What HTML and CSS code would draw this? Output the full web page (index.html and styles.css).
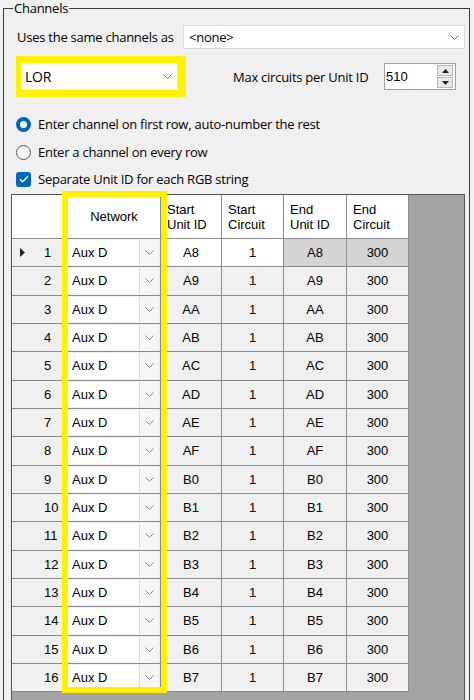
FILE: index.html
```html
<!doctype html>
<html lang="en">
    <head>
        <title>Channels</title>
        <link rel="stylesheet" href="styles.css">
    </head>
    <body>
        <fieldset class="channels">
            <legend>Channels</legend>

            <div class="same-row">
                <span class="same-label">Uses the same channels as</span>
                <div class="combo combo-same">
                    <span>&lt;none&gt;</span>
                    <svg class="chev" width="9" height="5" viewBox="0 0 9 5"><polyline points="0.5,0.5 4.5,4.5 8.5,0.5" /></svg>
                </div>
            </div>

            <div class="network-row">
                <div class="mark-box">
                    <div class="combo combo-net">
                        <span>LOR</span>
                        <svg class="chev" width="9" height="5" viewBox="0 0 9 5"><polyline points="0.5,0.5 4.5,4.5 8.5,0.5" /></svg>
                    </div>
                </div>
                <span class="max-label">Max circuits per Unit ID</span>
                <div class="updown">
                    <span class="updown-value">510</span>
                    <div class="spin">
                        <span class="spin-btn">
                            <svg width="7" height="4" viewBox="0 0 7 4"><polygon points="0,4 3.5,0 7,4" /></svg>
                        </span>
                        <span class="spin-btn">
                            <svg width="7" height="4" viewBox="0 0 7 4"><polygon points="0,0 3.5,4 7,0" /></svg>
                        </span>
                    </div>
                </div>
            </div>

            <div class="option option-first">
                <span class="radio checked"></span>
                Enter channel on first row, auto-number the rest
            </div>
            <div class="option">
                <span class="radio"></span>
                Enter a channel on every row
            </div>
            <div class="option option-check">
                <span class="check">
                    <svg width="10" height="8" viewBox="0 0 10 8"><polyline points="1,4.2 3.7,6.8 9,1.2" /></svg>
                </span>
                Separate Unit ID for each RGB string
            </div>

            <!-- channel grid -->
            <div class="dgv">
                <div class="dgv-head">
                    <div class="cell hd"></div>
                    <div class="cell hd hd-center">Network</div>
                    <div class="cell hd">Start<br>Unit ID</div>
                    <div class="cell hd">Start<br>Circuit</div>
                    <div class="cell hd">End<br>Unit ID</div>
                    <div class="cell hd">End<br>Circuit</div>
                </div>
                <div class="dgv-body">
                    <div class="cell rowhdr"><span class="mark"><svg width="5" height="9" viewBox="0 0 5 9"><polygon points="0,0 5,4.5 0,9" /></svg></span>1</div>
                    <div class="cell net"><div class="cell-combo"><span class="cell-text">Aux D</span><span class="drop"><svg class="chev" width="9" height="5" viewBox="0 0 9 5"><polyline points="0.5,0.5 4.5,4.5 8.5,0.5" /></svg></span></div></div>
                    <div class="cell edit">A8</div>
                    <div class="cell edit">1</div>
                    <div class="cell locked">A8</div>
                    <div class="cell locked">300</div>

                    <div class="cell rowhdr"><span class="mark"></span>2</div>
                    <div class="cell net"><div class="cell-combo"><span class="cell-text">Aux D</span><span class="drop"><svg class="chev" width="9" height="5" viewBox="0 0 9 5"><polyline points="0.5,0.5 4.5,4.5 8.5,0.5" /></svg></span></div></div>
                    <div class="cell">A9</div>
                    <div class="cell">1</div>
                    <div class="cell">A9</div>
                    <div class="cell">300</div>

                    <div class="cell rowhdr"><span class="mark"></span>3</div>
                    <div class="cell net"><div class="cell-combo"><span class="cell-text">Aux D</span><span class="drop"><svg class="chev" width="9" height="5" viewBox="0 0 9 5"><polyline points="0.5,0.5 4.5,4.5 8.5,0.5" /></svg></span></div></div>
                    <div class="cell">AA</div>
                    <div class="cell">1</div>
                    <div class="cell">AA</div>
                    <div class="cell">300</div>

                    <div class="cell rowhdr"><span class="mark"></span>4</div>
                    <div class="cell net"><div class="cell-combo"><span class="cell-text">Aux D</span><span class="drop"><svg class="chev" width="9" height="5" viewBox="0 0 9 5"><polyline points="0.5,0.5 4.5,4.5 8.5,0.5" /></svg></span></div></div>
                    <div class="cell">AB</div>
                    <div class="cell">1</div>
                    <div class="cell">AB</div>
                    <div class="cell">300</div>

                    <div class="cell rowhdr"><span class="mark"></span>5</div>
                    <div class="cell net"><div class="cell-combo"><span class="cell-text">Aux D</span><span class="drop"><svg class="chev" width="9" height="5" viewBox="0 0 9 5"><polyline points="0.5,0.5 4.5,4.5 8.5,0.5" /></svg></span></div></div>
                    <div class="cell">AC</div>
                    <div class="cell">1</div>
                    <div class="cell">AC</div>
                    <div class="cell">300</div>

                    <div class="cell rowhdr"><span class="mark"></span>6</div>
                    <div class="cell net"><div class="cell-combo"><span class="cell-text">Aux D</span><span class="drop"><svg class="chev" width="9" height="5" viewBox="0 0 9 5"><polyline points="0.5,0.5 4.5,4.5 8.5,0.5" /></svg></span></div></div>
                    <div class="cell">AD</div>
                    <div class="cell">1</div>
                    <div class="cell">AD</div>
                    <div class="cell">300</div>

                    <div class="cell rowhdr"><span class="mark"></span>7</div>
                    <div class="cell net"><div class="cell-combo"><span class="cell-text">Aux D</span><span class="drop"><svg class="chev" width="9" height="5" viewBox="0 0 9 5"><polyline points="0.5,0.5 4.5,4.5 8.5,0.5" /></svg></span></div></div>
                    <div class="cell">AE</div>
                    <div class="cell">1</div>
                    <div class="cell">AE</div>
                    <div class="cell">300</div>

                    <div class="cell rowhdr"><span class="mark"></span>8</div>
                    <div class="cell net"><div class="cell-combo"><span class="cell-text">Aux D</span><span class="drop"><svg class="chev" width="9" height="5" viewBox="0 0 9 5"><polyline points="0.5,0.5 4.5,4.5 8.5,0.5" /></svg></span></div></div>
                    <div class="cell">AF</div>
                    <div class="cell">1</div>
                    <div class="cell">AF</div>
                    <div class="cell">300</div>

                    <div class="cell rowhdr"><span class="mark"></span>9</div>
                    <div class="cell net"><div class="cell-combo"><span class="cell-text">Aux D</span><span class="drop"><svg class="chev" width="9" height="5" viewBox="0 0 9 5"><polyline points="0.5,0.5 4.5,4.5 8.5,0.5" /></svg></span></div></div>
                    <div class="cell">B0</div>
                    <div class="cell">1</div>
                    <div class="cell">B0</div>
                    <div class="cell">300</div>

                    <div class="cell rowhdr"><span class="mark"></span>10</div>
                    <div class="cell net"><div class="cell-combo"><span class="cell-text">Aux D</span><span class="drop"><svg class="chev" width="9" height="5" viewBox="0 0 9 5"><polyline points="0.5,0.5 4.5,4.5 8.5,0.5" /></svg></span></div></div>
                    <div class="cell">B1</div>
                    <div class="cell">1</div>
                    <div class="cell">B1</div>
                    <div class="cell">300</div>

                    <div class="cell rowhdr"><span class="mark"></span>11</div>
                    <div class="cell net"><div class="cell-combo"><span class="cell-text">Aux D</span><span class="drop"><svg class="chev" width="9" height="5" viewBox="0 0 9 5"><polyline points="0.5,0.5 4.5,4.5 8.5,0.5" /></svg></span></div></div>
                    <div class="cell">B2</div>
                    <div class="cell">1</div>
                    <div class="cell">B2</div>
                    <div class="cell">300</div>

                    <div class="cell rowhdr"><span class="mark"></span>12</div>
                    <div class="cell net"><div class="cell-combo"><span class="cell-text">Aux D</span><span class="drop"><svg class="chev" width="9" height="5" viewBox="0 0 9 5"><polyline points="0.5,0.5 4.5,4.5 8.5,0.5" /></svg></span></div></div>
                    <div class="cell">B3</div>
                    <div class="cell">1</div>
                    <div class="cell">B3</div>
                    <div class="cell">300</div>

                    <div class="cell rowhdr"><span class="mark"></span>13</div>
                    <div class="cell net"><div class="cell-combo"><span class="cell-text">Aux D</span><span class="drop"><svg class="chev" width="9" height="5" viewBox="0 0 9 5"><polyline points="0.5,0.5 4.5,4.5 8.5,0.5" /></svg></span></div></div>
                    <div class="cell">B4</div>
                    <div class="cell">1</div>
                    <div class="cell">B4</div>
                    <div class="cell">300</div>

                    <div class="cell rowhdr"><span class="mark"></span>14</div>
                    <div class="cell net"><div class="cell-combo"><span class="cell-text">Aux D</span><span class="drop"><svg class="chev" width="9" height="5" viewBox="0 0 9 5"><polyline points="0.5,0.5 4.5,4.5 8.5,0.5" /></svg></span></div></div>
                    <div class="cell">B5</div>
                    <div class="cell">1</div>
                    <div class="cell">B5</div>
                    <div class="cell">300</div>

                    <div class="cell rowhdr"><span class="mark"></span>15</div>
                    <div class="cell net"><div class="cell-combo"><span class="cell-text">Aux D</span><span class="drop"><svg class="chev" width="9" height="5" viewBox="0 0 9 5"><polyline points="0.5,0.5 4.5,4.5 8.5,0.5" /></svg></span></div></div>
                    <div class="cell">B6</div>
                    <div class="cell">1</div>
                    <div class="cell">B6</div>
                    <div class="cell">300</div>

                    <div class="cell rowhdr"><span class="mark"></span>16</div>
                    <div class="cell net"><div class="cell-combo"><span class="cell-text">Aux D</span><span class="drop"><svg class="chev" width="9" height="5" viewBox="0 0 9 5"><polyline points="0.5,0.5 4.5,4.5 8.5,0.5" /></svg></span></div></div>
                    <div class="cell">B7</div>
                    <div class="cell">1</div>
                    <div class="cell">B7</div>
                    <div class="cell">300</div>
                </div>
                <!-- highlight drawn over the Network column -->
                <div class="column-mark"></div>
            </div>
        </fieldset>
    </body>
</html>
```

FILE: styles.css
```css
/* Windows forms look */
html {
    overflow: hidden;
}
body {
    font-family: "Segoe UI", "Open Sans", "Noto Sans", sans-serif;
    font-size: 13px;
    letter-spacing: -0.25px;
    background: #f0f0f0;
    color: #000;
    margin: 0;
    padding: 0;
    height: 700px;
    overflow: hidden;
}
.channels {
    margin: 0 4px 0 3px;
    padding: 0;
    min-width: 0;
    height: 700px;
    box-sizing: border-box;
    border: 1px solid #3c3c3c;
    border-bottom: none;
}
.channels legend {
    margin-left: 9px;
    padding: 0 1px;
    line-height: 17px;
}

/* combo boxes */
.combo {
    display: flex;
    align-items: center;
    justify-content: space-between;
    background: white;
    border: 1px solid #dadada;
    box-sizing: border-box;
}
.chev {
    display: block;
}
.chev polyline {
    fill: none;
    stroke: #707070;
    stroke-width: 1;
}

.same-row {
    display: flex;
    align-items: center;
    height: 24px;
    margin-top: 8px;
    padding-left: 13px;
}
.same-label {
    width: 166px;
}
.combo-same {
    width: 282px;
    height: 24px;
    padding: 0 5px 0 5px;
}

.network-row {
    display: flex;
    align-items: center;
    height: 41px;
    margin-top: 7px;
    padding-left: 12px;
}
.mark-box {
    background: #fff200;
    padding: 7px 8px 7px 5px;
}
.combo-net {
    width: 157px;
    height: 27px;
    padding: 0 5px 0 3px;
    border-color: #ececec;
    font-size: 14px;
}
.max-label {
    width: 151px;
    margin-left: 47px;
}
.updown {
    display: flex;
    align-items: center;
    justify-content: space-between;
    width: 72px;
    height: 27px;
    box-sizing: border-box;
    background: white;
    border: 1px solid #a0a0a0;
    padding: 0 1px 0 1px;
}
.updown-value {
    font-family: "Liberation Sans", Arial, sans-serif;
    font-size: 13px;
    letter-spacing: 0;
}
.spin {
    display: flex;
    flex-direction: column;
    gap: 1px;
    margin-right: 1px;
}
.spin-btn {
    display: flex;
    align-items: center;
    justify-content: center;
    width: 16px;
    height: 11px;
    box-sizing: border-box;
    background: #e8e8e8;
    border: 1px solid #b8b8b8;
}
.spin-btn svg {
    display: block;
    fill: #202020;
}

/* radio buttons and check box */
.option {
    display: flex;
    align-items: center;
    gap: 7px;
    height: 28px;
    padding-left: 12px;
}
.option-first {
    margin-top: 13px;
}
.option-check {
    height: 26px;
}
.radio {
    width: 15px;
    height: 15px;
    box-sizing: border-box;
    border-radius: 50%;
    border: 1px solid #5c5c5c;
    background: #f6f6f6;
}
.radio.checked {
    border: 4.5px solid #0067c0;
    background: white;
}
.check {
    display: flex;
    align-items: center;
    justify-content: center;
    width: 15px;
    height: 15px;
    border-radius: 3px;
    background: #0067c0;
}
.check svg {
    display: block;
}
.check polyline {
    fill: none;
    stroke: white;
    stroke-width: 1.4;
}

/* data grid */
.dgv {
    position: relative;
    margin: 2px 0 0 7px;
    width: 454px;
    height: 506px;
    box-sizing: border-box;
    border: 1px solid #555;
    border-bottom: none;
    background: #a3a3a3;
    font-family: "Liberation Sans", Arial, sans-serif;
    font-size: 13px;
    letter-spacing: 0;
}
.dgv-head,
.dgv-body {
    display: grid;
    grid-template-columns: 56px 93px 61px 62px 63px 62px;
}
.dgv-head {
    grid-template-rows: 44px;
}
.dgv-body {
    grid-auto-rows: 28.33px;
}
.cell {
    display: flex;
    align-items: center;
    justify-content: center;
    box-sizing: border-box;
    border-right: 1px solid #8c8c8c;
    border-bottom: 1px solid #8c8c8c;
    background: #f0f0f0;
}
.cell.hd {
    background: white;
    justify-content: flex-start;
    padding-left: 6px;
    line-height: 15px;
}
.cell.hd-center {
    justify-content: center;
    padding-left: 0;
}
.cell.edit {
    background: white;
}
.cell.locked {
    background: #d4d4d4;
}
.cell.rowhdr {
    justify-content: flex-start;
    padding-left: 8px;
}
.mark {
    display: flex;
    align-items: center;
    width: 24px;
}
.mark svg {
    display: block;
    fill: #262626;
}
.cell.net {
    padding: 1px 2px 1px 0;
    align-items: stretch;
}
.cell-combo {
    display: flex;
    flex: 1;
    background: white;
}
.cell-text {
    flex: 1;
    display: flex;
    align-items: center;
    padding-left: 4px;
}
.drop {
    display: flex;
    align-items: center;
    justify-content: center;
    width: 18px;
    background: #f6f6f6;
    border-left: 1px solid #dcdcdc;
}
.drop .chev polyline {
    stroke: #8a8a8a;
}
.column-mark {
    position: absolute;
    left: 50px;
    top: -4px;
    width: 105px;
    height: 502px;
    box-sizing: border-box;
    border: 6px solid #fff200;
}
```
